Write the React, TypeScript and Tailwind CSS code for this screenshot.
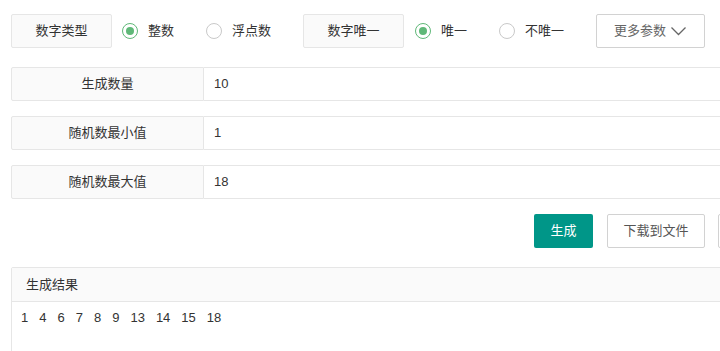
import React from "react";

const font = { fontFamily: '"Liberation Sans", "Noto Sans CJK SC", sans-serif' };

function Radio({ label, checked }: { label: string; checked?: boolean }) {
  return (
    <div className="flex items-center gap-[10px] text-[13px] text-[#333]">
      <span
        className={
          checked
            ? "flex h-[16px] w-[16px] items-center justify-center rounded-full border border-[#5FB878]"
            : "flex h-[16px] w-[16px] items-center justify-center rounded-full border border-[#c9c9c9]"
        }
      >
        {checked && <span className="h-[8px] w-[8px] rounded-full bg-[#5FB878]" />}
      </span>
      <span>{label}</span>
    </div>
  );
}

function Field({ label, value }: { label: string; value: string }) {
  return (
    <div className="flex h-[34px] text-[13px] text-[#333]">
      <div className="flex w-[193px] shrink-0 items-center justify-center rounded-l-[2px] border border-[#e6e6e6] bg-[#fafafa]">
        {label}
      </div>
      <div className="flex flex-1 items-center border-y border-[#e6e6e6] bg-white pl-[10px]">
        {value}
      </div>
    </div>
  );
}

export default function App() {
  const results = [1, 4, 6, 7, 8, 9, 13, 14, 15, 18];

  return (
    <div className="h-[351px] w-[720px] overflow-hidden bg-white" style={font}>
      <div className="flex w-[778px] flex-col pl-[11px] pt-[14px]">
        {/* options */}
        <div className="flex h-[34px] items-center">
          <div className="flex h-[34px] w-[101px] items-center justify-center rounded-[2px] border border-[#e6e6e6] bg-[#fafafa] text-[13px] text-[#333]">
            数字类型
          </div>
          <div className="ml-[10px]">
            <Radio label="整数" checked />
          </div>
          <div className="ml-[32px]">
            <Radio label="浮点数" />
          </div>
          <div className="ml-[32px] flex h-[34px] w-[101px] items-center justify-center rounded-[2px] border border-[#e6e6e6] bg-[#fafafa] text-[13px] text-[#333]">
            数字唯一
          </div>
          <div className="ml-[11px]">
            <Radio label="唯一" checked />
          </div>
          <div className="ml-[32px]">
            <Radio label="不唯一" />
          </div>
          <button className="ml-[32px] flex h-[34px] w-[109px] items-center justify-center gap-[4px] rounded-[2px] border border-[#d2d2d2] bg-white text-[13px] text-[#666]">
            更多参数
            <svg width="17" height="10" viewBox="0 0 17 10" fill="none">
              <path d="M1.5 1.5 L8.5 8.5 L15.5 1.5" stroke="#666" strokeWidth="1.3" />
            </svg>
          </button>
        </div>

        <div className="mt-[19px] flex flex-col gap-[15px]">
          <Field label="生成数量" value="10" />
          <Field label="随机数最小值" value="1" />
          <Field label="随机数最大值" value="18" />
        </div>

        {/* actions */}
        <div className="mt-[15px] flex h-[34px] justify-end gap-[13px]">
          <button className="mr-[1px] h-[34px] w-[59px] rounded-[2px] bg-[#009688] text-[13px] text-white">
            生成
          </button>
          <button className="h-[34px] w-[98px] rounded-[2px] border border-[#d2d2d2] bg-white text-[13px] text-[#555]">
            下载到文件
          </button>
          <button className="h-[34px] w-[60px] rounded-[2px] border border-[#d2d2d2] bg-white text-[13px] text-[#555]">
            清空
          </button>
        </div>

        {/* result */}
        <div className="mt-[19px] rounded-[2px] border border-[#e6e6e6]">
          <div className="flex h-[34px] items-center border-b border-[#e6e6e6] bg-[#fafafa] pl-[14px] text-[13px] text-[#333]">
            生成结果
          </div>
          <div className="flex gap-[11px] px-[9px] pt-[6px] pb-[30px] text-[13px] text-[#333]">
            {results.map((n) => (
              <span key={n}>{n}</span>
            ))}
          </div>
        </div>
      </div>
    </div>
  );
}
